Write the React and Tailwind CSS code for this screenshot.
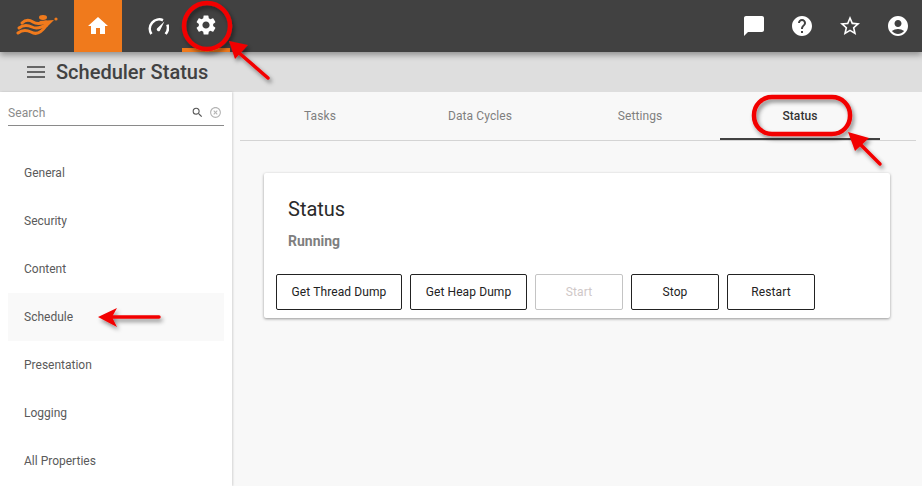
import React from 'react';
import { MdHome, MdSettings, MdChatBubble, MdHelp, MdStarBorder, MdAccountCircle, MdMenu, MdSearch, MdHighlightOff } from 'react-icons/md';

const sideItems = ['General', 'Security', 'Content', 'Schedule', 'Presentation', 'Logging', 'All Properties'];
const tabs = ['Tasks', 'Data Cycles', 'Settings', 'Status'];

function Logo() {
  return (
    <svg width="44" height="24" viewBox="0 0 44 24" className="ml-[16px]">
      <g fill="none" stroke="#f07a1c" strokeWidth="3" strokeLinecap="round">
        <path d="M6 9 C10 5 14 6 17 8 C20 10 24 10 30 8" />
        <path d="M3 14 C8 10 12 11 16 13 C20 15 25 14 31 10" />
        <path d="M2 19 C7 15 11 16 15 18 C20 21 25 19 30 12" />
      </g>
      <ellipse cx="27" cy="3.5" rx="4" ry="2.4" fill="#f07a1c" />
      <path d="M23 7 L38 6 L31 13 Z" fill="#f07a1c" />
      <circle cx="40" cy="5" r="1.6" fill="#f07a1c" />
    </svg>
  );
}

function Gauge() {
  return (
    <svg width="21" height="17" viewBox="0 0 21 17" fill="none" stroke="currentColor">
      <path d="M3.4 16 A9.4 9.4 0 0 1 15 2.2" strokeWidth="2.6" />
      <path d="M19.4 6.6 A9.4 9.4 0 0 1 17.6 16" strokeWidth="2.6" />
      <path d="M9 10.6 L16.4 3.6 L12 12.4 A1.7 1.7 0 0 1 9 10.6 Z" fill="currentColor" stroke="none" />
    </svg>
  );
}

function OutlineButton({ label, width, disabled }) {
  return (
    <button
      className={`h-[36px] rounded-[2px] border bg-white text-[12px] tracking-[0.1px] ${width} ${
        disabled ? 'border-[#c4c4c4] text-[#cfc8c8]' : 'border-[#222222] text-[#222222]'
      }`}
    >
      {label}
    </button>
  );
}

function Arrow({ d, head }) {
  return (
    <g>
      <path d={d} fill="none" stroke="#f20000" strokeWidth="3.5" strokeLinecap="round" />
      <polygon points={head} fill="#f20000" />
    </g>
  );
}

export default function App() {
  return (
    <div className="relative h-[486px] w-[922px] overflow-hidden bg-[#f8f8f8] font-['Roboto',sans-serif]">
      {/* TOP BAR */}
      <div className="relative z-10 flex h-[52px] items-stretch bg-[#414141] text-white shadow-[0_3px_6px_rgba(0,0,0,0.35)]">
        <div className="flex w-[74px] items-center">
          <Logo />
        </div>
        <div className="flex w-[48px] items-center justify-center bg-[#f07a1c]">
          <MdHome size={24} />
        </div>
        <div className="ml-[12px] flex w-[48px] items-center justify-center pt-[1px]">
          <Gauge />
        </div>
        <div className="flex w-[48px] items-center justify-center border-b-4 border-[#f07a1c] pt-[2px]">
          <MdSettings size={24} />
        </div>
        <div className="ml-auto flex items-center gap-[24px] pr-[12px]">
          <MdChatBubble size={24} />
          <MdHelp size={24} />
          <MdStarBorder size={24} />
          <MdAccountCircle size={24} />
        </div>
      </div>

      {/* TITLE BAR */}
      <div className="flex h-[40px] items-center bg-[#dedede] pl-[24px] text-[#424242]">
        <MdMenu size={24} className="text-[#666666]" />
        <span className="ml-[8px] text-[20px] font-medium">Scheduler Status</span>
      </div>

      <div className="flex h-[394px]">
        {/* SIDEBAR */}
        <div className="w-[232px] bg-white px-[8px] shadow-[1px_0_2px_rgba(0,0,0,0.15)]">
          <div className="flex h-[34px] items-center border-b border-[#8a8a8a] pt-[8px] text-[12px] tracking-[0.1px] text-[#8a8a8a]">
            <span>Search</span>
            <MdSearch size={13} className="ml-auto text-[#555555]" />
            <MdHighlightOff size={13} className="ml-[5px] mr-[2px] text-[#b5b5b5]" />
          </div>
          <div className="mt-[23px]">
            {sideItems.map((item) => (
              <div
                key={item}
                className={`flex h-[48px] items-center pl-[16px] text-[12px] text-[#5a5a5a] ${
                  item === 'Schedule' ? 'bg-[#f9f9f9]' : ''
                }`}
              >
                {item}
              </div>
            ))}
          </div>
        </div>

        {/* MAIN */}
        <div className="flex-1 pl-[8px] pr-[6px]">
          <div className="flex h-[49px] border-b border-[#d4d4d4]">
            {tabs.map((tab) => (
              <div
                key={tab}
                className={`flex h-[48px] w-[160px] items-center justify-center border-y-2 border-t-transparent text-[12px] tracking-[0.1px] ${
                  tab === 'Status' ? 'border-b-[#424242] font-medium text-[#333333]' : 'border-b-transparent text-[#7f7f7f]'
                }`}
              >
                {tab}
              </div>
            ))}
          </div>

          <div className="ml-[24px] mt-[32px] h-[145px] w-[626px] rounded-[2px] bg-white pl-[12px] pt-[24px] shadow-[0_1px_3px_rgba(0,0,0,0.4)]">
            <div className="pl-[12px] text-[20px] leading-[24px] text-[#2a2a2a]">Status</div>
            <div className="mt-[10px] pl-[12px] text-[14px] font-bold leading-[20px] text-[#7f7f7f]">Running</div>
            <div className="mt-[23px] flex gap-[8px]">
              <OutlineButton label="Get Thread Dump" width="w-[126px]" />
              <OutlineButton label="Get Heap Dump" width="w-[117px]" />
              <OutlineButton label="Start" width="w-[88px]" disabled />
              <OutlineButton label="Stop" width="w-[88px]" />
              <OutlineButton label="Restart" width="w-[88px]" />
            </div>
          </div>
        </div>
      </div>

      {/* RED ANNOTATIONS */}
      <svg width="922" height="486" className="pointer-events-none absolute left-0 top-0 z-20">
        <defs>
          <filter id="soft" x="-30%" y="-30%" width="170%" height="170%">
            <feDropShadow dx="2" dy="3" stdDeviation="2" floodColor="#000000" floodOpacity="0.45" />
          </filter>
        </defs>
        <g filter="url(#soft)">
          <circle cx="207" cy="26" r="23" fill="none" stroke="#f20000" strokeWidth="4.5" />
          <rect x="754" y="97" width="96" height="37" rx="18" fill="none" stroke="#f20000" strokeWidth="4.5" />
          <Arrow d="M268 78 L238 52" head="229,41 248,45 235,59" />
          <Arrow d="M880 164 L857 141" head="848,132 869,138 855,151" />
          <Arrow d="M159 317 L112 317" head="98,317 117,308 112,317 117,327" />
        </g>
      </svg>
    </div>
  );
}
